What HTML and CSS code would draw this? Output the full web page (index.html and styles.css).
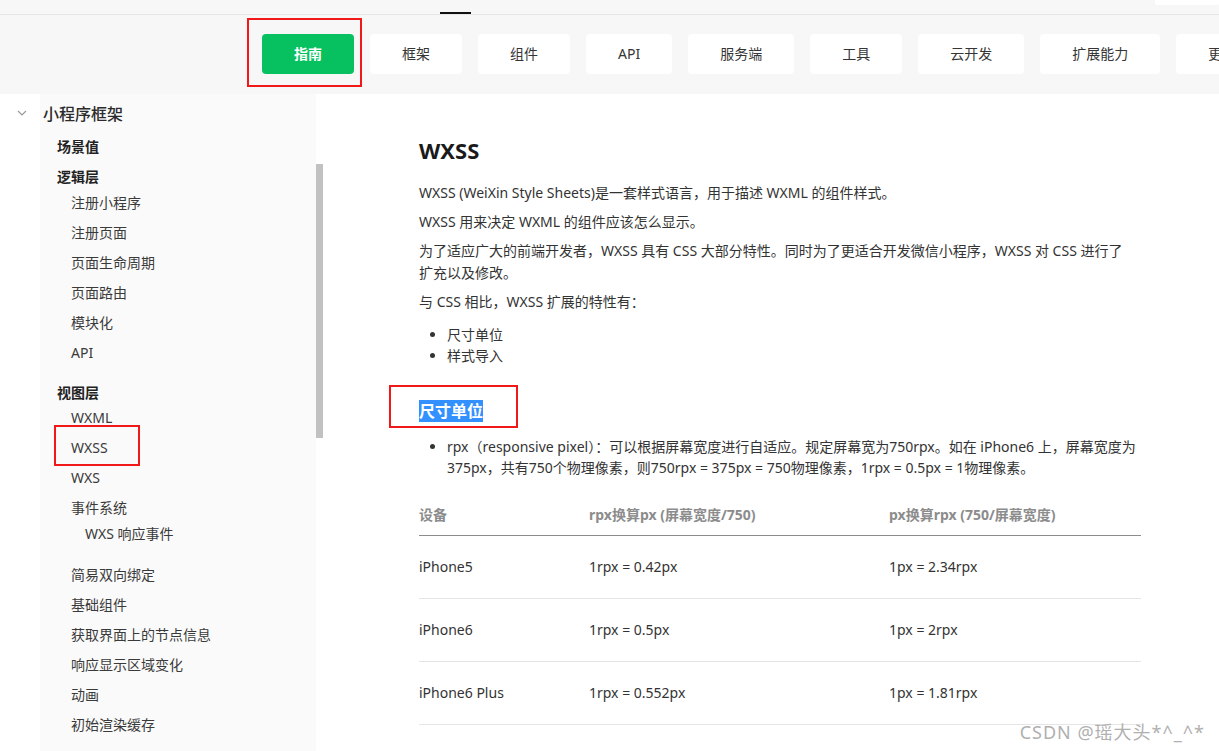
FILE: index.html
```html
<!DOCTYPE html>
<html lang="zh-CN">
<head>
<meta charset="utf-8">
<title>WXSS</title>
<link rel="stylesheet" href="styles.css">
</head>
<body>
<header class="header">
  <div class="topbar">
    <span class="tab-indicator"></span>
    <span class="search-stub"></span>
  </div>
  <nav class="mainnav">
    <a class="nav-btn active">指南</a>
    <a class="nav-btn">框架</a>
    <a class="nav-btn">组件</a>
    <a class="nav-btn">API</a>
    <a class="nav-btn">服务端</a>
    <a class="nav-btn">工具</a>
    <a class="nav-btn">云开发</a>
    <a class="nav-btn">扩展能力</a>
    <a class="nav-btn">更多</a>
  </nav>
</header>
<div class="layout">
  <aside class="sidebar">
    <div class="side-nav">
      <div class="side-title">
        <svg class="chevron" width="10" height="6" viewBox="0 0 10 6"><polyline points="1,1 5,5 9,1" fill="none" stroke="#9a9a9a" stroke-width="1.2"/></svg>
        <span>小程序框架</span>
      </div>
      <ul class="side-groups">
        <li class="side-group"><span class="side-label">场景值</span></li>
        <li class="side-group">
          <span class="side-label">逻辑层</span>
          <ul class="side-items">
            <li>注册小程序</li>
            <li>注册页面</li>
            <li>页面生命周期</li>
            <li>页面路由</li>
            <li>模块化</li>
            <li>API</li>
          </ul>
        </li>
        <li class="side-group group-view">
          <span class="side-label">视图层</span>
          <ul class="side-items items-view">
            <li>WXML</li>
            <li class="current">WXSS</li>
            <li>WXS</li>
            <li>事件系统
              <ul class="side-sub">
                <li>WXS 响应事件</li>
              </ul>
            </li>
            <li>简易双向绑定</li>
            <li>基础组件</li>
            <li>获取界面上的节点信息</li>
            <li>响应显示区域变化</li>
            <li>动画</li>
            <li>初始渲染缓存</li>
          </ul>
        </li>
      </ul>
    </div>
    <div class="scroll-track"><div class="scroll-thumb"></div></div>
  </aside>
  <main class="content">
    <h1 class="doc-title">WXSS</h1>
    <p class="doc-p">WXSS (WeiXin Style Sheets)是一套样式语言，用于描述 WXML 的组件样式。</p>
    <p class="doc-p">WXSS 用来决定 WXML 的组件应该怎么显示。</p>
    <p class="doc-p">为了适应广大的前端开发者，WXSS 具有 CSS 大部分特性。同时为了更适合开发微信小程序，WXSS 对 CSS 进行了扩充以及修改。</p>
    <p class="doc-p">与 CSS 相比，WXSS 扩展的特性有：</p>
    <ul class="doc-list">
      <li>尺寸单位</li>
      <li>样式导入</li>
    </ul>
    <h2 class="doc-h2"><span class="selected">尺寸单位</span></h2>
    <ul class="doc-list rpx-list">
      <li>rpx（responsive pixel）：可以根据屏幕宽度进行自适应。规定屏幕宽为750rpx。如在 iPhone6 上，屏幕宽度为375px，共有750个物理像素，则750rpx = 375px = 750物理像素，1rpx = 0.5px = 1物理像素。</li>
    </ul>
    <table class="doc-table">
      <thead>
        <tr>
          <th class="col-device">设备</th>
          <th class="col-rpx">rpx换算px (屏幕宽度/750)</th>
          <th class="col-px">px换算rpx (750/屏幕宽度)</th>
        </tr>
      </thead>
      <tbody>
        <tr><td>iPhone5</td><td>1rpx = 0.42px</td><td>1px = 2.34rpx</td></tr>
        <tr><td>iPhone6</td><td>1rpx = 0.5px</td><td>1px = 2rpx</td></tr>
        <tr><td>iPhone6 Plus</td><td>1rpx = 0.552px</td><td>1px = 1.81rpx</td></tr>
      </tbody>
    </table>
  </main>
</div>
<div class="mark mark-nav"></div>
<div class="mark mark-side"></div>
<div class="mark mark-h2"></div>
<div class="watermark">CSDN @瑶大头*^_^*</div>
</body>
</html>
```
FILE: styles.css
```css
* { box-sizing: border-box; }
html, body { margin: 0; padding: 0; }
body {
  width: 1219px;
  height: 751px;
  overflow: hidden;
  position: relative;
  background: #fff;
  font-family: "Noto Sans", "Noto Sans CJK SC", sans-serif;
  font-size: 14px;
  color: #333;
}
ul { list-style: none; margin: 0; padding: 0; }

/* header */
.header { background: #f7f7f7; }
.topbar {
  height: 15px;
  border-bottom: 1px solid #e6e6e6;
  display: flex;
}
.tab-indicator {
  width: 31px;
  height: 2px;
  background: #111;
  margin-left: 440px;
  align-self: flex-end;
}
.search-stub {
  margin-left: auto;
  width: 64px;
  height: 5px;
  background: #fff;
  border-radius: 0 0 2px 2px;
}
.mainnav {
  display: flex;
  gap: 16px;
  height: 79px;
  padding: 19px 0 20px 262px;
  overflow: hidden;
}
.nav-btn {
  flex-shrink: 0;
  height: 40px;
  line-height: 40px;
  padding: 0 32px;
  background: #fff;
  border-radius: 4px;
  color: #353535;
  font-family: "Noto Sans", "Noto Sans CJK SC", sans-serif;
  font-size: 14px;
  white-space: nowrap;
}
.nav-btn.active {
  background: #07c160;
  color: #fff;
  font-weight: 700;
}

/* layout */
.layout { display: flex; height: 657px; }
.sidebar { display: flex; flex-shrink: 0; }
.side-nav {
  width: 316px;
  background: linear-gradient(to right, #fff 40px, #fafafa 40px);
}
.scroll-track { width: 7px; }
.scroll-thumb {
  margin-top: 70px;
  height: 274px;
  background: #c1c1c1;
}
.side-title {
  display: flex;
  align-items: center;
  height: 38px;
  padding-left: 17px;
  font-size: 16px;
  color: #2b2b2b;
  font-weight: 500;
}
.chevron { margin-right: 16px; }
.side-groups { padding-left: 57px; }
.side-label {
  display: block;
  line-height: 30px;
  font-weight: 700;
  color: #222;
}
.side-items { margin-top: -4px; padding-left: 14px; }
.side-items li { line-height: 30px; color: #3a3a3a; }
.group-view { margin-top: 10px; }
.items-view { margin-top: -5px; }
.side-sub { margin: -4px 0 11px; padding-left: 14px; }

/* content */
.content {
  width: 818px;
  padding: 41px 0 0 96px;
}
.doc-title {
  margin: 0 0 17px;
  font-size: 22px;
  line-height: 30px;
  font-weight: 700;
  color: #1a1a1a;
}
.doc-p {
  margin: 0 0 7px;
  max-width: 712px;
  line-height: 22px;
}
.doc-list {
  margin-top: 11px;
  padding-left: 28px;
  list-style: disc;
}
.doc-list li { line-height: 21px; }
.doc-h2 {
  margin: 33px 0 0;
  font-size: 16px;
  line-height: 24px;
  font-weight: 700;
}
.selected { background: #3390ff; color: #fff; }
.rpx-list { margin-top: 13px; margin-right: -20px; }
.doc-table {
  margin-top: 15px;
  width: 722px;
  border-collapse: separate;
  border-spacing: 0;
  text-align: left;
}
.col-device { width: 170px; }
.col-rpx { width: 300px; }
.col-px { width: 252px; }
.doc-table th {
  padding: 11px 0 10px;
  line-height: 21px;
  font-weight: 700;
  color: #8c8c8c;
  border-bottom: 1px solid #8c8c8c;
}
.doc-table td {
  padding: 20px 0 21px;
  line-height: 21px;
  color: #333;
  border-bottom: 1px solid #e5e5e5;
}

/* annotations */
.mark { position: absolute; border: 2px solid #f01818; }
.mark-nav { left: 247px; top: 18px; width: 115px; height: 69px; }
.mark-side { left: 54px; top: 425px; width: 86px; height: 41px; }
.mark-h2 { left: 389px; top: 385px; width: 129px; height: 43px; }
.watermark {
  position: absolute;
  right: 14px;
  bottom: 9px;
  line-height: 20px;
  font-size: 18px;
  letter-spacing: 1px;
  color: #b0b0b0;
  font-family: "Noto Sans", "Noto Sans CJK SC", sans-serif;
}
```
